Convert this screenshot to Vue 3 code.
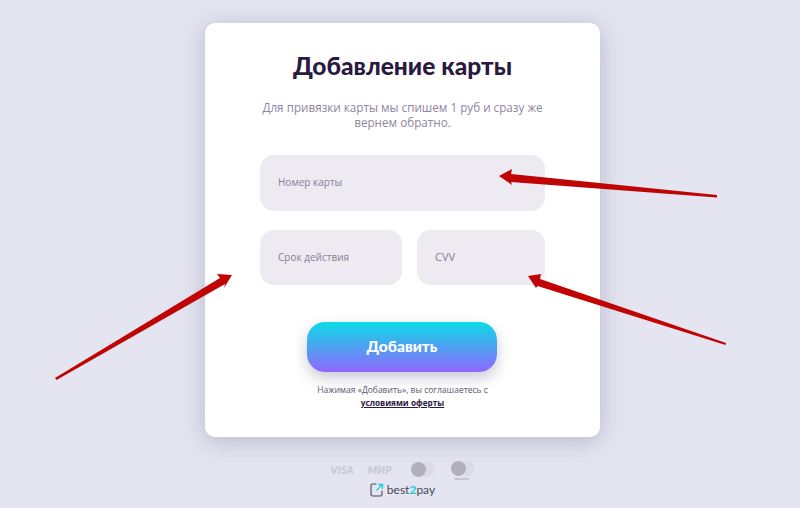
<script setup>
// Card form fields
const hint = 'Для привязки карты мы спишем 1 руб и сразу же вернем обратно.'

// Red annotation arrows laid over the page: tail, shaft, head, shaft, tail
const arrows = [
  '717,195 511,174 512,169 499,176 512,185 511,182 717,197.5',
  '55,378 220,278 217,274 232,275 224,288 225,284 56.5,380',
  '726,343 540,279 541,274 528,276 536,288 537.5,286 725.5,345',
]
</script>

<template>
  <div class="page">
    <div class="card">
      <h1 class="card__title">Добавление карты</h1>
      <p class="card__hint">{{ hint }}</p>

      <div class="form">
        <div class="field">Номер карты</div>
        <div class="form__row">
          <div class="field field--date">Срок действия</div>
          <div class="field field--cvv">CVV</div>
        </div>
      </div>

      <button class="submit">Добавить</button>

      <p class="terms">
        Нажимая «Добавить», вы соглашаетесь с<br>
        <a class="terms__link">условиями оферты</a>
      </p>
    </div>

    <div class="brands">
      <span class="brands__visa">VISA</span>
      <span class="brands__mir">МИР</span>
      <span class="mc">
        <i class="mc__a"></i><i class="mc__b"></i>
      </span>
      <span class="mc mc--maestro">
        <i class="mc__a"></i><i class="mc__b"></i>
        <small class="mc__label">maestro</small>
      </span>
    </div>

    <div class="logo">
      <svg width="14" height="14" viewBox="0 0 14 14" fill="none">
        <path d="M6 1H2.500A1.500 1.500 0 0 0 1 2.500V11.500A1.500 1.500 0 0 0 2.500 13H10.500A1.500 1.500 0 0 0 12 11.500V8" stroke="#4a4560" stroke-width="1.100" stroke-linecap="round"/>
        <path d="M6.500 7.500L12 2M8 1.500h4.500V6" stroke="#22c9e6" stroke-width="1.300"/>
      </svg>
      <span class="logo__text">best<b>2</b>pay</span>
    </div>

    <svg class="arrows" width="800" height="508" viewBox="0 0 800 508">
      <polygon v-for="(pts, i) in arrows" :key="i" :points="pts" fill="#c00404" />
    </svg>
  </div>
</template>

<style scoped>
.page {
  position: relative;
  width: 800px;
  height: 508px;
  overflow: hidden;
  background: #e4e5f0;
  display: flex;
  flex-direction: column;
  align-items: center;
  padding-top: 23px;
  box-sizing: border-box;
  font-family: "Open Sans", Lato, sans-serif;
}

/* Card */
.card {
  width: 395px;
  height: 414px;
  box-sizing: border-box;
  margin-left: 5px;
  padding-top: 28px;
  background: #fff;
  border-radius: 10px;
  box-shadow: 0 4px 24px rgba(70, 70, 110, .28);
  display: flex;
  flex-direction: column;
  align-items: center;
  flex-shrink: 0;
}
.card__title {
  margin: 0;
  font-family: Lato, sans-serif;
  font-size: 24.500px;
  line-height: 30px;
  font-weight: 900;
  color: #2b1a40;
}
.card__hint {
  width: 300px;
  margin: 19px 0 0;
  font-size: 11.700px;
  line-height: 15px;
  text-align: center;
  color: #8f85a3;
}

/* Fields */
.form {
  width: 285px;
  margin-top: 25px;
  display: flex;
  flex-direction: column;
  gap: 19px;
}
.form__row { display: flex; gap: 15px; }
.field {
  height: 56px;
  box-sizing: border-box;
  padding-left: 18px;
  padding-bottom: 2px;
  display: flex;
  align-items: center;
  background: #edeaf1;
  border-radius: 14px;
  font-size: 10px;
  color: #85809a;
}
.form__row .field { height: 55px; }
.field--date { width: 142px; }
.field--cvv  { width: 128px; font-size: 11px; }

/* Button */
.submit {
  width: 190px;
  height: 50px;
  margin-top: 37px;
  margin-right: 1px;
  padding-bottom: 4px;
  border: none;
  border-radius: 18px;
  background: linear-gradient(180deg, #0cdbe8 0%, #9067fb 100%);
  box-shadow: 0 6px 14px rgba(60, 60, 110, .28);
  font-family: Lato, sans-serif;
  font-size: 15.500px;
  font-weight: 900;
  color: #fff;
}

.terms {
  margin: 11px 0 0;
  font-size: 8.500px;
  line-height: 13px;
  text-align: center;
  color: #5d5670;
}
.terms__link {
  font-size: 8.200px;
  font-weight: 700;
  color: #2b1a40;
  text-decoration: underline;
}

/* Payment systems */
.brands {
  height: 18px;
  margin-top: 23px;
  display: flex;
  align-items: center;
  color: #c9c7d3;
  font-family: Lato, sans-serif;
  font-weight: 900;
  font-style: italic;
  margin-left: 4px;
}
.brands__visa { font-size: 11px; width: 24px; margin-right: 13px; }
.brands__mir  { font-size: 11px; width: 28px; margin-right: 15px; }
.mc { position: relative; display: block; width: 23px; height: 15px; margin-top: 1px; }
.mc--maestro { margin-left: 17px; margin-top: -2px; }
.mc__a, .mc__b {
  position: absolute;
  top: 0;
  width: 15px;
  height: 15px;
  border-radius: 50%;
}
.mc__b { left: 8px; background: #dcdbe4; }
.mc__a { left: 0; background: #b3aebd; z-index: 1; }
.mc__label {
  position: absolute;
  top: 15px;
  left: 4px;
  font-size: 4px;
  line-height: 5px;
  font-style: normal;
  font-weight: 400;
  color: #9895a8;
}

/* best2pay logo */
.logo {
  margin-top: 5px;
  margin-left: 5px;
  display: flex;
  align-items: center;
  gap: 3px;
}
.logo__text {
  font-family: Lato, sans-serif;
  font-size: 12px;
  line-height: 14px;
  color: #4a4560;
}
.logo__text b { font-weight: 700; color: #22c9e6; }

/* Annotation layer */
.arrows {
  position: absolute;
  top: 0;
  left: 0;
  pointer-events: none;
}
</style>
